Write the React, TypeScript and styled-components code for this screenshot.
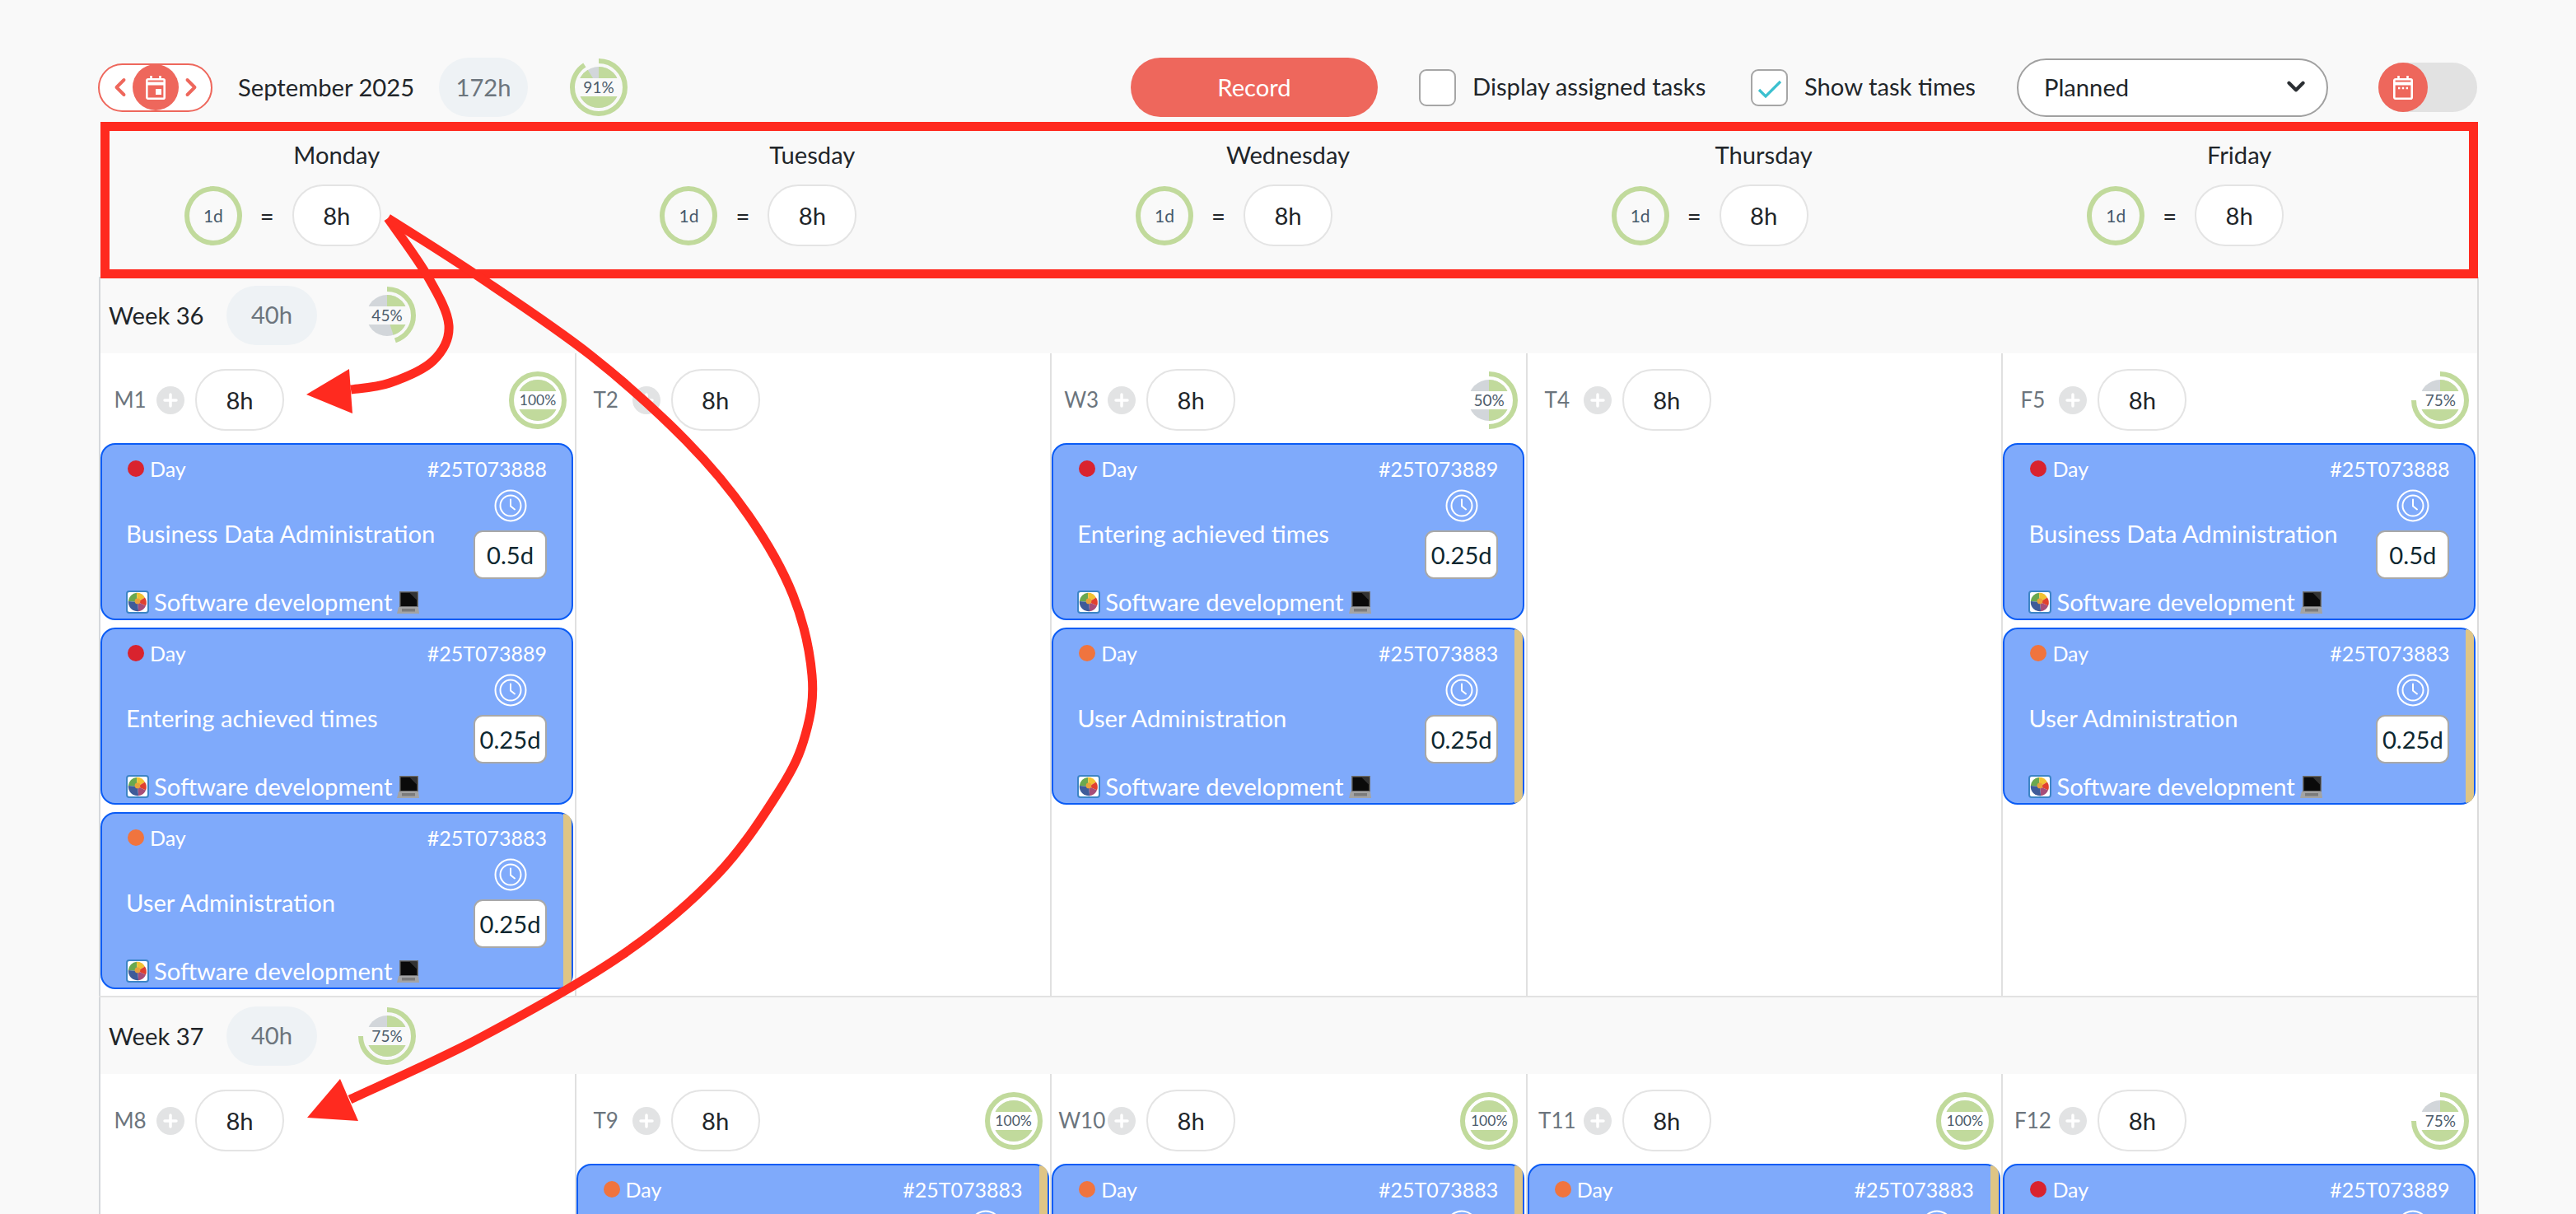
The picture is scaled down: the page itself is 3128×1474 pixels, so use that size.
import React from 'react';
import styled, { createGlobalStyle } from 'styled-components';
import { ChevronDown, ChevronLeft, ChevronRight, Plus } from 'lucide-react';

const GlobalStyle = createGlobalStyle`
  html, body { margin: 0; padding: 0; background: #f9f9f9; }
  * { box-sizing: border-box; }
  body { font-family: Lato, "Open Sans", sans-serif; color: #212529; }
`;

const Page = styled.div`
  position: relative;
  width: 3128px;
  height: 1474px;
  overflow: hidden;
  padding: 70px 120px 0;
  font-size: 29.2px;
`;

/* toolbar */
const Toolbar = styled.div`
  display: flex;
  align-items: center;
  height: 72px;
`;

const NavPill = styled.div`
  display: flex;
  align-items: center;
  justify-content: center;
  width: 139px;
  height: 59px;
  margin-left: -1px;
  border: 2px solid #ee675c;
  border-radius: 30px;
  background: #fff;
  color: #ee675c;

  & > svg {
    flex: none;
    margin: 0 -3px;
  }
`;

const RoundIcon = styled.span`
  display: flex;
  align-items: center;
  justify-content: center;
  flex: none;
  width: ${p => p.$size}px;
  height: ${p => p.$size}px;
  border-radius: 50%;
  background: #ee675c;
`;

const Month = styled.span`
  width: 212px;
  margin: 0 32px 0 31px;
  padding-bottom: 2px;
  white-space: nowrap;
`;

const GreyPill = styled.span`
  display: flex;
  align-items: center;
  justify-content: center;
  flex: none;
  width: 108px;
  height: 72px;
  padding-bottom: 2px;
  border-radius: 36px;
  background: #eef2f5;
  color: #6c757d;
`;

const MonthProgress = styled.span`
  display: flex;
  margin-left: 51px;
`;

const ToolbarRight = styled.div`
  display: flex;
  align-items: center;
  margin-left: auto;
`;

const RecordButton = styled.button`
  width: 300px;
  height: 72px;
  margin-right: 50px;
  padding: 0 0 2px;
  border: none;
  border-radius: 36px;
  background: #ee675c;
  color: #fff;
  font: inherit;
`;

const CheckRow = styled.label`
  display: flex;
  align-items: center;
  gap: 20px;
  width: ${p => p.$width}px;
  white-space: nowrap;
`;

const CheckText = styled.span`
  padding-bottom: 3px;
`;

const CheckBox = styled.span`
  display: block;
  flex: none;
  width: 45px;
  height: 45px;
  border: 2px solid #a6a6a6;
  border-radius: 9px;
  background: #fff;
`;

const SelectBox = styled.div`
  display: flex;
  align-items: center;
  justify-content: space-between;
  width: 378px;
  height: 71px;
  padding: 0 20px 2px 31px;
  margin-right: 61px;
  border: 2px solid #a0a0a0;
  border-radius: 36px;
  background: #fff;
`;

const ToggleTrack = styled.div`
  display: flex;
  align-items: center;
  width: 120px;
  height: 60px;
  border-radius: 30px;
  background: #e2e2e2;
`;

/* month day headers */
const DayHeaders = styled.div`
  display: grid;
  grid-template-columns: repeat(5, 1fr);
  height: 194px;
`;

const DayHeader = styled.div`
  display: flex;
  flex-direction: column;
  align-items: stretch;
  padding-top: 30px;
  text-align: center;
`;

const DayName = styled.div`
  height: 32px;
  line-height: 32px;
  margin-bottom: 20px;
`;

const DayFormula = styled.div`
  display: grid;
  grid-template-columns: 1fr 108px 1fr;
`;

const FormulaLeft = styled.div`
  display: flex;
  align-items: center;
  justify-content: flex-end;
  gap: 22px;
  padding-right: 22px;
`;

const RingLabel = styled.span`
  display: flex;
  align-items: center;
  justify-content: center;
  width: 70px;
  height: 72px;
  border: 6px solid #c1da9c;
  border-radius: 50%;
  color: #46596b;
  font-size: 21px;
`;

const HoursPill = styled.span`
  display: flex;
  align-items: center;
  justify-content: center;
  flex: none;
  width: 108px;
  height: 75px;
  border: 2px solid #e4e4e4;
  border-radius: 37px;
  background: #fff;
`;

/* calendar */
const Calendar = styled.div`
  box-shadow: 2px 0 0 #dcdcdc;
`;

const WeekBar = styled.div`
  display: flex;
  align-items: center;
  height: 93px;
  padding-left: 10px;
  border-left: 2px solid #d5d8db;
  background: #f9f9f9;
`;

const WeekName = styled.span`
  width: 143px;
`;

const WeekPill = styled(GreyPill)`
  width: 110px;
  margin-right: 50px;
`;

const WeekDays = styled.div`
  display: grid;
  grid-template-columns: repeat(5, 1fr);
  border-bottom: 2px solid #e2e2e2;
`;

const DayCell = styled.div`
  display: flex;
  flex-direction: column;
  gap: 9px;
  min-height: 780px;
  padding: 19px 1.6px 0 0;
  border-left: 2px solid #e0e0e0;
  background: #fff;

  &:first-child {
    border-left-color: #d5d8db;
  }
`;

const CellHead = styled.div`
  display: flex;
  align-items: center;
  height: 75px;
  margin-bottom: 6px;
  padding: 0 8px 0 8px;
`;

const CellCode = styled.span`
  width: 56px;
  padding-bottom: 2px;
  color: #6c757d;
  font-size: 26px;
  text-align: center;
  white-space: nowrap;
`;

const AddButton = styled.span`
  display: flex;
  align-items: center;
  justify-content: center;
  flex: none;
  width: 34px;
  height: 34px;
  margin: 0 13px 0 4px;
  border-radius: 50%;
  background: #e2e3e4;
`;

const PushRight = styled.span`
  margin-left: auto;
  display: flex;
`;

/* donut */
const DonutWrap = styled.span`
  display: grid;
  place-items: center;
  flex: none;
  width: 70px;
  height: 70px;

  & > * {
    grid-area: 1 / 1;
  }
`;

const DonutLabel = styled.span`
  width: 52px;
  height: 22px;
  line-height: 22px;
  background: ${p => p.$bg};
  color: #4c5c6c;
  font-size: ${p => p.$size}px;
  text-align: center;
`;

/* task card */
const Card = styled.div`
  display: flex;
  flex: none;
  height: 215px;
  border: 2px solid #0a5cf5;
  border-radius: 18px;
  background: #7faafb;
  color: #fff;
`;

const CardInner = styled.div`
  flex: 1;
  min-width: 0;
  padding: 14px ${p => (p.$flagged ? 20 : 30)}px 0 29px;
`;

const FlagStrip = styled.span`
  flex: none;
  width: 10px;
  border-radius: 0 16px 16px 0;
  background: #dfc585;
`;

const CardTop = styled.div`
  display: flex;
  align-items: center;
  justify-content: space-between;
  height: 30px;
  font-size: 25px;
`;

const Priority = styled.span`
  display: flex;
  align-items: center;
  gap: 7px;
  padding-left: 2px;
`;

const Dot = styled.span`
  width: 20px;
  height: 20px;
  border-radius: 50%;
  background: ${p => p.$color};
`;

const CardBody = styled.div`
  display: flex;
  align-items: center;
  justify-content: space-between;
  margin-top: 10px;
`;

const CardTitle = styled.span`
  padding-bottom: 3px;
`;

const TimeCol = styled.div`
  display: flex;
  flex-direction: column;
  align-items: center;
  gap: 10px;
  width: 89px;
`;

const Duration = styled.span`
  display: flex;
  align-items: center;
  justify-content: center;
  width: 89px;
  height: 59px;
  border: 2px solid #a8a8a8;
  border-radius: 11px;
  background: #fff;
  color: #0d2730;
`;

const CardFoot = styled.div`
  display: flex;
  align-items: center;
  gap: 6px;
  margin-top: 10px;
  white-space: nowrap;
`;

const Annotations = styled.svg`
  position: absolute;
  top: 0;
  left: 0;
  pointer-events: none;
`;

const CalendarIcon = ({ dots }: { dots?: boolean }) => (
  <svg width="26" height="30" viewBox="0 0 26 30" fill="none" stroke="#fff" strokeWidth="2.6">
    <rect x="2.3" y="5.3" width="21.4" height="23.4" rx="1.5" />
    <path d="M2 10.5h22" strokeWidth="4" />
    <path d="M7.5 1v5M18.5 1v5" />
    {dots ? (
      <path d="M7 16h2.4M11.8 16h2.4M16.6 16h2.4" strokeWidth="2.4" />
    ) : (
      <rect x="13" y="17" width="7" height="7" fill="#fff" stroke="none" />
    )}
  </svg>
);

const Donut = ({ pct, bg }: { pct: number; bg: string }) => (
  <DonutWrap>
    <svg width="70" height="70" viewBox="0 0 70 70">
      <circle cx="35" cy="35" r="32" fill="none" stroke="#c1da9c" strokeWidth="6" pathLength="100" strokeDasharray={`${pct} 100`} transform="rotate(-90 35 35)" />
      <circle cx="35" cy="35" r="25" fill="#d2d6da" />
      <circle cx="35" cy="35" r="12.5" fill="none" stroke="#c1da9c" strokeWidth="25" pathLength="100" strokeDasharray={`${pct} 100`} transform="rotate(-90 35 35)" />
    </svg>
    <DonutLabel $bg={bg} $size={pct === 100 ? 17.5 : 19}>{pct}%</DonutLabel>
  </DonutWrap>
);

const ClockIcon = () => (
  <svg width="40" height="40" viewBox="0 0 40 40" fill="none" stroke="#fff" strokeWidth="2">
    <circle cx="20" cy="20" r="18.5" />
    <circle cx="20" cy="20" r="12.5" />
    <path d="M20 12.5v8l5 4" strokeLinecap="round" />
  </svg>
);

const CompanyLogo = () => (
  <svg width="28" height="28" viewBox="0 0 28 28">
    <rect x="1" y="1" width="26" height="26" rx="3" fill="#fff" stroke="#3d85c6" strokeWidth="2" />
    <g transform="translate(14 14) scale(1.12) translate(-14 -14)">
      <path d="M14 14 L4 13 A10 10 0 0 1 13 4 Z" fill="#6aa84f" />
      <path d="M14 14 L13 4 A10 10 0 0 1 22 9 Z" fill="#f1c232" />
      <path d="M14 14 L22 9 A10 10 0 0 1 23 18 Z" fill="#e0402f" />
      <path d="M14 14 L23 18 A10 10 0 0 1 15 24 Z" fill="#a64d79" />
      <path d="M14 14 L15 24 A10 10 0 0 1 4 13 Z" fill="#3f5b99" />
      <circle cx="14" cy="13" r="3" fill="#e9a23b" />
    </g>
  </svg>
);

const LaptopIcon = () => (
  <svg width="27" height="28" viewBox="0 0 27 28">
    <path d="M3 1 H26 V20 H3 Z" fill="#6e6e6e" />
    <path d="M4.5 2.5 H24.5 V19 H4.5 Z" fill="#0a0a0a" />
    <path d="M15 2.5 H24.5 V12 Z" fill="#333" />
    <path d="M2 20 H26 L27 28 H0 Z" fill="#a3a3a3" />
    <path d="M6 22 H22 V25.5 H6 Z" fill="#7b7b7b" />
  </svg>
);

type Task = { id: string; title: string; time: string; color: string; flagged?: boolean };

const RED = '#d9232e';
const ORANGE = '#f0743e';
const BDA: Task = { id: '#25T073888', title: 'Business Data Administration', time: '0.5d', color: RED };
const EAT: Task = { id: '#25T073889', title: 'Entering achieved times', time: '0.25d', color: RED };
const UA: Task = { id: '#25T073883', title: 'User Administration', time: '0.25d', color: ORANGE, flagged: true };

const TaskCard = ({ task }: { task: Task }) => (
  <Card>
    <CardInner $flagged={task.flagged}>
      <CardTop>
        <Priority><Dot $color={task.color} />Day</Priority>
        <span>{task.id}</span>
      </CardTop>
      <CardBody>
        <CardTitle>{task.title}</CardTitle>
        <TimeCol>
          <ClockIcon />
          <Duration>{task.time}</Duration>
        </TimeCol>
      </CardBody>
      <CardFoot>
        <CompanyLogo />
        Software development
        <LaptopIcon />
      </CardFoot>
    </CardInner>
    {task.flagged && <FlagStrip />}
  </Card>
);

type Day = { code: string; pct?: number; tasks: Task[] };

const weeks: { name: string; pct: number; days: Day[] }[] = [
  {
    name: 'Week 36',
    pct: 45,
    days: [
      { code: 'M1', pct: 100, tasks: [BDA, EAT, UA] },
      { code: 'T2', tasks: [] },
      { code: 'W3', pct: 50, tasks: [EAT, UA] },
      { code: 'T4', tasks: [] },
      { code: 'F5', pct: 75, tasks: [BDA, UA] },
    ],
  },
  {
    name: 'Week 37',
    pct: 75,
    days: [
      { code: 'M8', tasks: [] },
      { code: 'T9', pct: 100, tasks: [UA] },
      { code: 'W10', pct: 100, tasks: [UA] },
      { code: 'T11', pct: 100, tasks: [UA] },
      { code: 'F12', pct: 75, tasks: [EAT] },
    ],
  },
];

// catmull-rom through the points, so the arrows stay hand-drawn looking
const smooth = (pts: number[][]) => {
  let d = `M${pts[0][0]} ${pts[0][1]}`;
  for (let i = 0; i < pts.length - 1; i++) {
    const a = pts[Math.max(i - 1, 0)];
    const b = pts[i];
    const c = pts[i + 1];
    const e = pts[Math.min(i + 2, pts.length - 1)];
    d += ` C${b[0] + (c[0] - a[0]) / 6} ${b[1] + (c[1] - a[1]) / 6} ${c[0] - (e[0] - b[0]) / 6} ${c[1] - (e[1] - b[1]) / 6} ${c[0]} ${c[1]}`;
  }
  return d;
};

const shortArrow = [[471, 265], [519, 335], [545, 395], [526, 438], [473, 465], [426, 473]];
const longArrow = [
  [471, 265], [580, 335], [718, 432], [833, 535], [909, 626], [963, 723], [986, 820],
  [978, 892], [947, 959], [871, 1062], [756, 1159], [583, 1260], [425, 1335],
];

const weekdays = ['Monday', 'Tuesday', 'Wednesday', 'Thursday', 'Friday'];

const App: React.FC = () => (
  <Page>
    <GlobalStyle />
    <Toolbar>
      <NavPill>
        <ChevronLeft size={36} strokeWidth={2.6} />
        <RoundIcon $size={56}><CalendarIcon /></RoundIcon>
        <ChevronRight size={36} strokeWidth={2.6} />
      </NavPill>
      <Month>September 2025</Month>
      <GreyPill>172h</GreyPill>
      <MonthProgress><Donut pct={91} bg="#f9f9f9" /></MonthProgress>
      <ToolbarRight>
        <RecordButton>Record</RecordButton>
        <CheckRow $width={403}><CheckBox /><CheckText>Display assigned tasks</CheckText></CheckRow>
        <CheckRow $width={323}>
          <CheckBox>
            <svg width="41" height="41" viewBox="0 0 41 41" fill="none" stroke="#3bc0cf" strokeWidth="3.2">
              <path d="M8 23l8 8 18-18" />
            </svg>
          </CheckBox>
          <CheckText>Show task times</CheckText>
        </CheckRow>
        <SelectBox>
          Planned
          <ChevronDown size={34} strokeWidth={3} color="#2b2f33" />
        </SelectBox>
        <ToggleTrack>
          <RoundIcon $size={60}><CalendarIcon dots /></RoundIcon>
        </ToggleTrack>
      </ToolbarRight>
    </Toolbar>

    <DayHeaders>
      {weekdays.map(day => (
        <DayHeader key={day}>
          <DayName>{day}</DayName>
          <DayFormula>
            <FormulaLeft>
              <RingLabel>1d</RingLabel>
              <span>=</span>
            </FormulaLeft>
            <HoursPill>8h</HoursPill>
          </DayFormula>
        </DayHeader>
      ))}
    </DayHeaders>

    <Calendar>
      {weeks.map(week => (
        <div key={week.name}>
          <WeekBar>
            <WeekName>{week.name}</WeekName>
            <WeekPill>40h</WeekPill>
            <Donut pct={week.pct} bg="#f9f9f9" />
          </WeekBar>
          <WeekDays>
            {week.days.map(day => (
              <DayCell key={day.code}>
                <CellHead>
                  <CellCode>{day.code}</CellCode>
                  <AddButton><Plus size={24} strokeWidth={3.5} color="#fff" /></AddButton>
                  <HoursPill>8h</HoursPill>
                  {day.pct !== undefined && (
                    <PushRight><Donut pct={day.pct} bg="#fff" /></PushRight>
                  )}
                </CellHead>
                {day.tasks.map(task => <TaskCard key={task.id} task={task} />)}
              </DayCell>
            ))}
          </WeekDays>
        </div>
      ))}
    </Calendar>

    <Annotations width="3128" height="1474" viewBox="0 0 3128 1474" fill="none">
      <rect x="127.5" y="153.5" width="2876" height="179" stroke="#ff2a1f" strokeWidth="11" />
      <path d={smooth(shortArrow)} stroke="#ff2a1f" strokeWidth="11" />
      <path d="M372 479 L424 448 L428 502 Z" fill="#ff2a1f" />
      <path d={smooth(longArrow)} stroke="#ff2a1f" strokeWidth="11" />
      <path d="M373 1357 L413 1310 L435 1361 Z" fill="#ff2a1f" />
    </Annotations>
  </Page>
);

export default App;
